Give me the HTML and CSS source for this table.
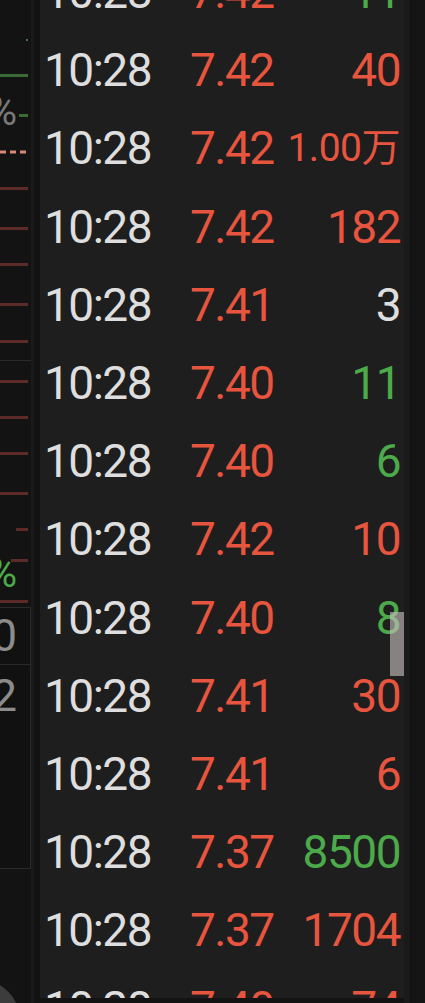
FILE: index.html
```html
<!DOCTYPE html>
<html lang="zh">
<head>
<meta charset="utf-8">
<link rel="stylesheet" href="styles.css">
</head>
<body>
<div class="app">
  <aside class="left">
    <div class="chart">
      <svg width="31" height="605" viewBox="0 0 31 605">
        <rect x="26" y="39" width="2" height="2" fill="#3f7a3c"/>
        <rect x="0" y="74" width="28" height="3" fill="#3b6b35"/>
        <text x="17" y="125" text-anchor="end" class="pct grey">0%</text>
        <rect x="19" y="114" width="9" height="3" fill="#3b6b35"/>
        <line x1="0" y1="152" x2="28" y2="152" stroke="#d88a74" stroke-width="3" stroke-dasharray="6 4"/>
        <g fill="#5c2b27">
          <rect x="0" y="187" width="28" height="3"/>
          <rect x="0" y="227" width="28" height="3"/>
          <rect x="0" y="263" width="28" height="3"/>
          <rect x="0" y="303" width="28" height="3"/>
          <rect x="0" y="340" width="28" height="3"/>
          <rect x="0" y="380" width="28" height="3"/>
          <rect x="0" y="416" width="28" height="3"/>
          <rect x="0" y="452" width="28" height="3"/>
          <rect x="0" y="492" width="28" height="3"/>
          <rect x="16" y="528" width="12" height="3"/>
          <rect x="11" y="559" width="17" height="3"/>
          <rect x="0" y="600" width="28" height="3"/>
        </g>
        <text x="17" y="587" text-anchor="end" class="pct green">0%</text>
        <rect x="0" y="360" width="31" height="1" fill="#2a2a2a"/>
        <rect x="31" y="360" width="1" height="245" fill="#2a2a2a"/>
      </svg>
    </div>
    <div class="cell short"><span>10</span></div>
    <div class="cell tall"><span>12</span></div>
  </aside>
  <main class="main">
    <div class="list">
      <div class="row"><span class="t">10:28</span><span class="p up">7.42</span><span class="v down">11</span></div>
      <div class="row"><span class="t">10:28</span><span class="p up">7.42</span><span class="v up">40</span></div>
      <div class="row"><span class="t">10:28</span><span class="p up">7.42</span><span class="v up small">1.00万</span></div>
      <div class="row"><span class="t">10:28</span><span class="p up">7.42</span><span class="v up">182</span></div>
      <div class="row"><span class="t">10:28</span><span class="p up">7.41</span><span class="v flat">3</span></div>
      <div class="row"><span class="t">10:28</span><span class="p up">7.40</span><span class="v down">11</span></div>
      <div class="row"><span class="t">10:28</span><span class="p up">7.40</span><span class="v down">6</span></div>
      <div class="row"><span class="t">10:28</span><span class="p up">7.42</span><span class="v up">10</span></div>
      <div class="row"><span class="t">10:28</span><span class="p up">7.40</span><span class="v down">8</span></div>
      <div class="row"><span class="t">10:28</span><span class="p up">7.41</span><span class="v up">30</span></div>
      <div class="row"><span class="t">10:28</span><span class="p up">7.41</span><span class="v up">6</span></div>
      <div class="row"><span class="t">10:28</span><span class="p up">7.37</span><span class="v down">8500</span></div>
      <div class="row"><span class="t">10:28</span><span class="p up">7.37</span><span class="v up">1704</span></div>
      <div class="row"><span class="t">10:28</span><span class="p up">7.40</span><span class="v up">74</span></div>
    </div>
    <div class="scrollbar"></div>
  </main>
  <div class="right"></div>
  <div class="fab"></div>
</div>
</body>
</html>
```
FILE: styles.css
```css
* { box-sizing: border-box; }
html, body {
  margin: 0;
  padding: 0;
  background: #131313;
}
body {
  width: 425px;
  height: 1003px;
  overflow: hidden;
  font-family: Roboto, "Noto Sans CJK SC", sans-serif;
}
.app {
  position: relative;
  display: flex;
  height: 1003px;
}
.left {
  width: 34px;
  flex: none;
  display: flex;
  flex-direction: column;
  border-right: 3px solid #1a1a1a;
  margin-right: 6px;
  background: #131313;
}
.chart {
  height: 605px;
  flex: none;
}
.chart svg { display: block; }
.pct {
  font-family: Roboto, sans-serif;
  font-size: 40px;
}
.pct.grey { fill: #7a7a7a; }
.pct.green { fill: #4caa4a; }
.cell {
  width: 32px;
  margin-left: -1px;
  border: 1px solid #2a2a2a;
  border-left: none;
  background: #111111;
  display: flex;
  justify-content: flex-end;
  overflow: hidden;
  color: #8c8c8c;
  font-size: 45px;
  white-space: nowrap;
  padding-right: 13px;
}
.cell.short {
  height: 58px;
  margin-top: 2px;
  align-items: center;
  line-height: 58px;
}
.cell.tall {
  height: 204px;
  line-height: 62px;
  margin-top: 0;
  border-top: none;
}
.main {
  position: relative;
  width: 364px;
  height: 998px;
  flex: none;
  background: #1e1e1e;
  overflow: hidden;
}
.list {
  margin-top: -47px;
  display: flex;
  flex-direction: column;
}
.row {
  height: 78.2px;
  display: flex;
  align-items: center;
  font-size: 46px;
  letter-spacing: -1.5px;
  line-height: 78.2px;
  padding: 0 4px 0 4px;
  white-space: nowrap;
}
.t {
  width: 146px;
  color: #dedede;
}
.p {
  width: 96px;
}
.v {
  flex: 1;
  text-align: right;
}
.v.small {
  font-size: 39px;
  letter-spacing: -0.5px;
}
.up { color: #e8553f; }
.down { color: #4caa4a; }
.flat { color: #dedede; }
.scrollbar {
  position: absolute;
  left: 350px;
  top: 612px;
  width: 14px;
  height: 64px;
  background: rgba(200, 190, 190, 0.62);
}
.right {
  flex: 1;
  background: #151515;
  border-left: 6px solid #1a1a1a;
  position: relative;
}
.right::before {
  content: "";
  position: absolute;
  left: 0;
  top: 0;
  width: 1px;
  height: 100%;
  background: #101010;
}
.fab {
  position: absolute;
  left: -60px;
  top: 980px;
  width: 80px;
  height: 80px;
  border-radius: 50%;
  background: #3c3c3c;
}
```
